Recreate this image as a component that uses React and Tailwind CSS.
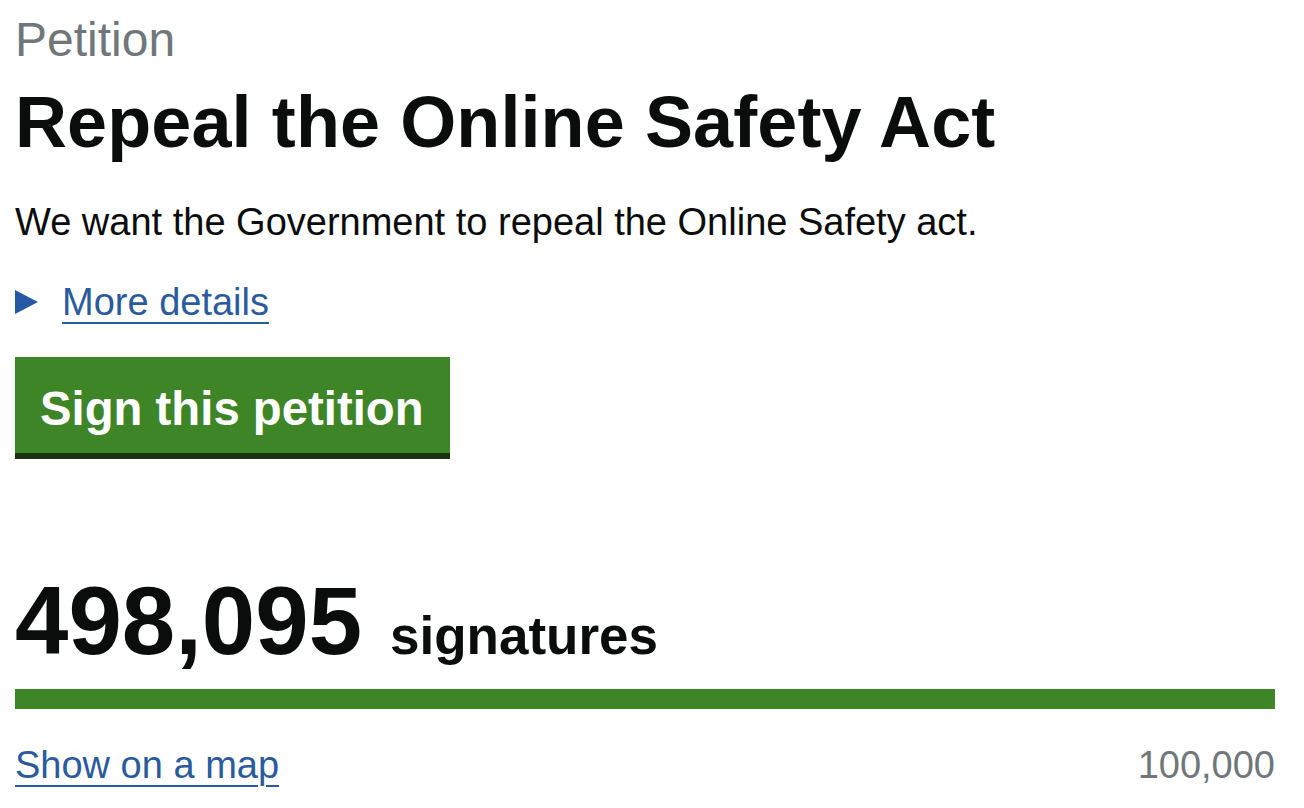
const font = { fontFamily: '"Liberation Sans", Arial, sans-serif' }

export default function App() {
  const count = 498095
  const target = 100000
  const pct = Math.min(100, (count / target) * 100)

  return (
    <div className="min-h-screen bg-white text-[#0b0c0c]" style={font}>
      <div className="w-[1275px] pl-[15px] pt-[16px]">
        <p className="text-[48px] leading-[48px] text-[#6f777b]">Petition</p>
        <h1 className="mt-[22px] text-[72px] leading-[72px] font-bold tracking-[0.1px]">Repeal the Online Safety Act</h1>
        <p className="mt-[45px] text-[38px] leading-[38px]">
          We want the Government to repeal the Online Safety act.
        </p>

        <div className="mt-[42px] flex items-center text-[38px] leading-[38px]">
          <svg width="23" height="24" viewBox="0 0 23 24" className="mr-[24px] shrink-0">
            <polygon points="0,0 23,12 0,24" fill="#2559a3" />
          </svg>
          <a href="#" className="text-[#2a5b9c] underline decoration-2 underline-offset-[7px]">
            More details
          </a>
        </div>

        <button className="mt-[36px] block bg-[#3d8527] text-white text-[47.3px] leading-[48px] font-bold pl-[25px] pr-[26px] pt-[28px] pb-[20px] shadow-[0_6px_0_#1b3310]">
          Sign this petition
        </button>

        <div className="mt-[120px] flex items-baseline">
          <span className="text-[96px] leading-[96px] font-bold">498,095</span>
          <span className="ml-[28px] text-[53px] font-bold">signatures</span>
        </div>

        <div className="mt-[13px] h-[20px] w-full bg-[#e6e6e6]">
          <div className="h-full bg-[#3d8527]" style={{ width: `${pct}%` }} />
        </div>

        <div className="mt-[37px] flex justify-between text-[38px] leading-[38px]">
          <a href="#" className="text-[#2a5b9c] underline decoration-2 underline-offset-[7px]">
            Show on a map
          </a>
          <span className="text-[#6f777b]">100,000</span>
        </div>
      </div>
    </div>
  )
}
